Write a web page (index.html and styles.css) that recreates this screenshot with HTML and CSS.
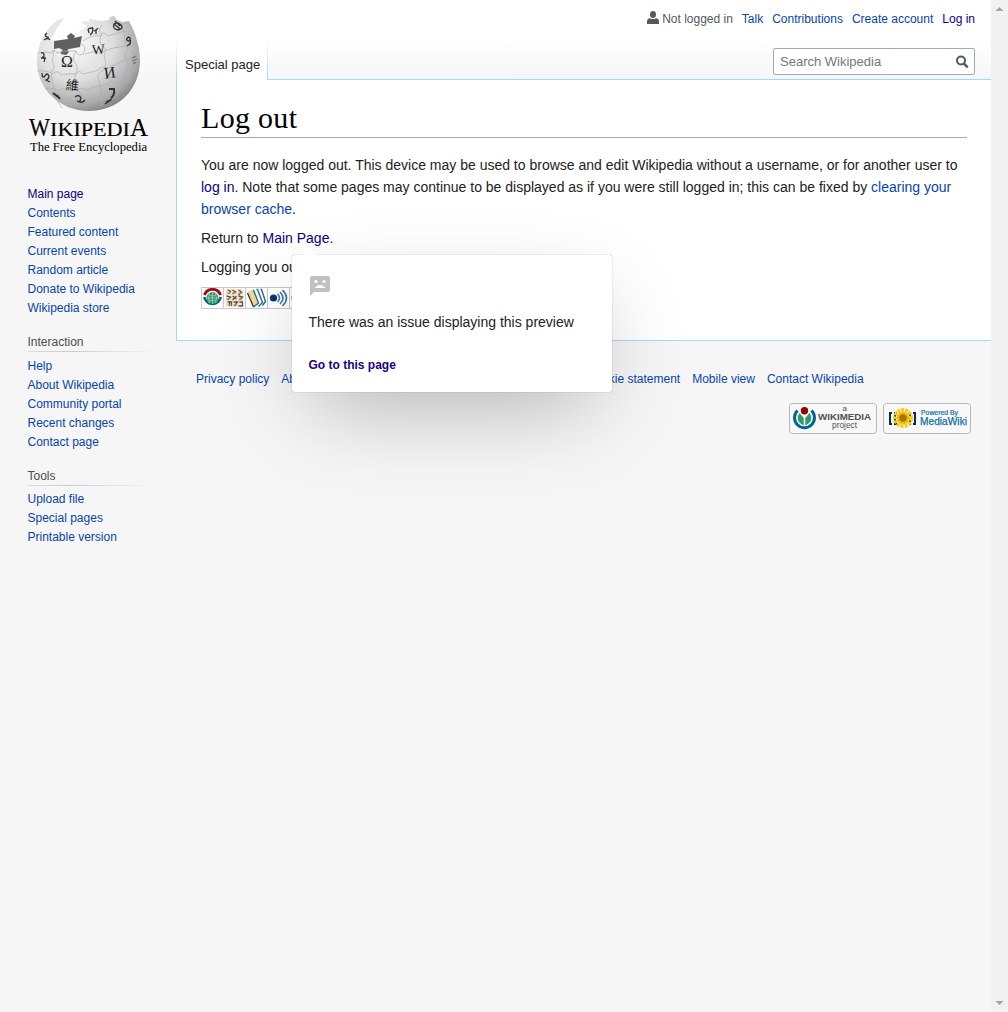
FILE: index.html
```html
<!DOCTYPE html>
<html lang="en">
<head>
<meta charset="utf-8">
<title>Log out - Wikipedia</title>
<link rel="stylesheet" href="styles.css">
</head>
<body>
<div class="page">
  <aside class="sidebar">
    <svg class="logo" width="140" height="155" viewBox="0 0 140 155">
      <defs>
        <radialGradient id="globe" cx=".36" cy=".3" r=".75"><stop offset="0" stop-color="#fafafa"/><stop offset=".5" stop-color="#dededf"/><stop offset=".85" stop-color="#aaa"/><stop offset="1" stop-color="#818181"/></radialGradient>
      </defs>
      <path d="M38 15l6-2-3 5-4 5-2 5-4 5 3 4 27-6-2-5 5-2 3-4-5-1 1-3 6 1 0-3 6 1 6 1 8-1 1-3 4-1 3 4 6 2 6-1C114 25 120 40 120 55c0 30-22 51-51 51S17 84 17 56C17 38 26 23 38 15z" fill="url(#globe)"/>
      <path d="M34 36l14-2-1-3 4-3 4 3-1 2 8-2-2 11-11 2q-3 1 0 3l-3 3-5-1q-1-2 2-4l-4-2-5 1z" fill="#606060"/>
      <g fill="none" stroke="#aeaeae" stroke-width=".7">
        <path d="M18 48q8-2 13 0 3-5 6 0 9-3 19-2 2 6 7 3 5-7-3-11"/>
        <path d="M17 66q10-1 16 3 4-5 8 1 8-2 15-1 3-5 7 0 9-2 16-4 2-5 8-2 9-3 17-8 5 1 15-6"/>
        <path d="M25 84q9-2 14 2 5-5 9 0 9-2 15-3 4 4 9-1 9-1 16-3 4-5 7 0 9-5 16-8"/>
        <path d="M33 45q1 8-1 11 4 6 0 10-2 8 3 18 0 10 7 19M56 46q-5 8 0 13 3 7-1 12-1 10 5 17 0 9 7 16M82 20q-5 6 0 9-4 6 0 12 6 3 2 9 3 8 1 14-10 5-6 12 4 10 2 25M105 17q-6 4 0 12-2 8 3 14-5 5-1 12 3 7-2 14-3 12-10 25"/>
        <path d="M63 36q10-7 17-5 3-6 8 0 9-3 18-5 4 6 8 4M65 49q5-1 11-3 4 5 8 0 10-4 22-5 3-5 8-2M36 93q15 0 25 6 10-7 30-9"/>
      </g>
      <g class="globe-letter">
        <text x="41" y="62" font-size="16">Ω</text><text x="72" y="49" font-size="14" transform="rotate(-5 78 45)">W</text><text x="84" y="73" font-size="16" transform="rotate(-8 90 68)">И</text><text class="cjk" x="46" y="85" font-size="13" transform="rotate(5 53 80)">維</text>
        <g fill="none" stroke="#333" stroke-width="1.300">
          <path d="M68 24l1 4M72 22l1 3M68 24q5-2 5 0 0 4-3 6M74 26q3-1 4-3M76 25v4"/>
          <path d="M94 19q-2 5 4 6 6-1 3-5-4-4-7-1l6 5M95 16l5 5"/>
          <path d="M108 32q-3 4 1 4 3-3-1-4M110 34q2 5-3 7"/>
          <path d="M24 35q4-3 6 0M25 30q1 3 4 2M25 30l2-2"/>
          <path d="M21 48q3-1 3 2t-2 2q4 1 2 5M21 53h5"/>
          <path d="M22 68q0 6 3 3 2-4 4 0 0 3-3 4l4 2"/>
          <path d="M112 53l4-2M112 56l5-2M113 59l3-2" opacity=".5"/>
          <path d="M89 84h5q1 6-3 9" stroke-width="2"/>
          <path d="M33 88l5 4M37 90l3 4" stroke-width="2"/>
          <path d="M55 92q4-3 6 1-1 5-4 3 5 3 8-1"/>
          <path d="M86 97l6-3M85 99l6-4"/>
        </g>
      </g>
      <g class="wordmark"><text x="9" y="131" font-size="25" textLength="21" lengthAdjust="spacingAndGlyphs">W</text><text x="30" y="131" font-size="19" textLength="80" lengthAdjust="spacingAndGlyphs">IKIPEDI</text><text x="110" y="131" font-size="25" textLength="18" lengthAdjust="spacingAndGlyphs">A</text><text x="10" y="145.500" font-size="13.500" stroke="none" textLength="117" lengthAdjust="spacingAndGlyphs">The Free Encyclopedia</text></g>
    </svg>
    <nav class="portal">
      <a class="visited">Main page</a><a>Contents</a><a>Featured content</a><a>Current events</a><a>Random article</a><a>Donate to Wikipedia</a><a>Wikipedia store</a>
    </nav>
    <nav class="portal">
      <h3>Interaction</h3>
      <a>Help</a><a>About Wikipedia</a><a>Community portal</a><a>Recent changes</a><a>Contact page</a>
    </nav>
    <nav class="portal tools">
      <h3>Tools</h3>
      <a>Upload file</a><a>Special pages</a><a>Printable version</a>
    </nav>
  </aside>

  <div class="column">
    <header class="head">
      <div class="personal">
        <span class="anon"><svg width="12" height="14" viewBox="0 0 12 14"><ellipse cx="6" cy="3.500" rx="3" ry="3.500"/><path d="M0 13v-2.500Q0 7.500 3 7.200q3 1.700 6 0 3 .3 3 3.300V13z"/></svg>Not logged in</span>
        <a>Talk</a><a>Contributions</a><a>Create account</a><a class="visited">Log in</a>
      </div>
      <div class="bar">
        <span class="tab">Special page</span>
        <div class="search"><span>Search Wikipedia</span><svg width="14" height="14" viewBox="0 0 14 14" fill="none" stroke="#54595d" stroke-width="2"><circle cx="6" cy="5.500" r="4"/><path d="M8.700 8.300l4 4" stroke-width="2.500"/></svg></div>
      </div>
    </header>
    <main class="content">
      <h1>Log out</h1>
      <p>You are now logged out. This device may be used to browse and edit Wikipedia without a username, or for another user to <a class="visited">log in</a>. Note that some pages may continue to be displayed as if you were still logged in; this can be fixed by <a>clearing your browser cache</a>.</p>
      <p>Return to <span class="preview-anchor"><a class="visited">Main Page</a><span class="popup">
          <svg class="sad" width="20" height="20" viewBox="0 0 20 20"><path d="M2 0h16q2 0 2 2v12q0 2-2 2H4l-4 4V2Q0 0 2 0z" fill="#c1c1c1"/><circle cx="6" cy="5.500" r="1.600" fill="#fff"/><circle cx="14" cy="5.500" r="1.600" fill="#fff"/><path d="M4.500 12q5.500-6 11 0z" fill="#fff"/></svg>
          <span class="issue">There was an issue displaying this preview</span>
          <b>Go to this page</b>
        </span></span>.</p>
      <p>Logging you out</p>
      <div class="projects">
        <svg viewBox="0 0 20 20"><path d="M2 7A8.500 8.500 0 0 1 18 7" fill="none" stroke="#a20a16" stroke-width="3"/><path d="M1.800 9a8.300 8.300 0 0 0 16.400 0" fill="none" stroke="#096391" stroke-width="2.600"/><circle cx="10" cy="10" r="6" fill="#379665"/><path d="M4 10h12M10 4v12M6 6q4 4 8 0M6 14q4-4 8 0M7 5q-2 5 0 10M13 5q2 5 0 10" fill="none" stroke="#a6d8b9" stroke-width=".7"/></svg>
        <svg viewBox="0 0 20 20"><path d="M1 1h18v18H1z" fill="#f1e8d8"/><path d="M3 2l3 1-2 3M8 2l3 2-3 2M14 2l3 2-3 3M2 8l4 1-3 3M8 8l4 3M12 8l-4 4M14 8l4 1-3 3M3 14h4v4M5 13v5M9 14h4l-3 4M15 14h3v4h-4" fill="none" stroke="#675040" stroke-width="1.300"/><path d="M2 5h4M8 5h4M14 5h4M2 11h4M14 11h4M3 17h4M9 17h4" stroke="#b79a75"/></svg>
        <svg viewBox="0 0 20 20"><path d="M1 4l6-3 5 14-5 4z" fill="#eed995"/><path d="M7 2l5 13-5 4M10 1.500l1 0 5 13-4 4M14 1.500h1l4 12-3 4" fill="none" stroke="#2e6ba0" stroke-width="1.400"/><path d="M1 5l6 14" stroke="#333" stroke-width="1.300"/></svg>
        <svg viewBox="0 0 20 20"><circle cx="5" cy="10" r="3.600" fill="#063774"/><g fill="none" stroke="#3c74ac" stroke-width="1.600"><path d="M9 6q4 4 0 8M11.500 4q6 6 0 12M14 2q8 8 0 16"/></g></svg>
        <svg viewBox="0 0 20 20"><circle cx="9" cy="10" r="8" fill="#345597"/></svg>
      </div>
    </main>
    <footer>
      <div class="links"><a>Privacy policy</a><a>About Wikipedia</a><a>Disclaimers</a><a>Developers</a><a>Statistics</a><a>Cookie statement</a><a>Mobile view</a><a>Contact Wikipedia</a></div>
      <div class="badges">
        <svg width="88" height="31" viewBox="0 0 88 31"><rect class="plate" x=".5" y=".5" width="87" height="30" rx="3"/><path d="M8.500 7.500a10 10 0 1 0 14 0" fill="none" stroke="#069" stroke-width="3"/><path d="M10.500 10q-5 8 4.200 12.500V15zM20.500 10q5 8-4.200 12.500V15z" fill="#396"/><circle cx="15.500" cy="7.700" r="3.700" fill="#900"/><g fill="#505050"><text x="53.500" y="7.500" font-size="8">a</text><text x="29" y="17" font-size="9" font-weight="700" textLength="53" lengthAdjust="spacingAndGlyphs">WIKIMEDIA</text><text x="43" y="25" font-size="8.500" textLength="25" lengthAdjust="spacingAndGlyphs">project</text></g></svg>
        <svg width="88" height="31" viewBox="0 0 88 31"><rect class="plate" x=".5" y=".5" width="87" height="30" rx="3"/><path d="M9 10H7v11h2M14 10h-2v11h2M30 10h2v11h-2M26 10h1v11h-1" fill="none" stroke="#002c68" stroke-width="2"/><circle cx="20" cy="15" r="7.500" fill="none" stroke="#f5cd14" stroke-width="5" stroke-dasharray="2.800 .9"/><circle cx="20" cy="15" r="6" fill="#f3ba05"/><circle cx="20" cy="15" r="3.700" fill="#aa730d"/><g fill="#1470a4"><text x="38" y="12" font-size="7" stroke="#1470a4" stroke-width=".2" textLength="37" lengthAdjust="spacingAndGlyphs">Powered By</text><text x="37" y="22" font-size="10" stroke="#1470a4" stroke-width=".25" textLength="47" lengthAdjust="spacingAndGlyphs">MediaWiki</text></g></svg>
      </div>
    </footer>
  </div>
  <div class="scrollbar"><svg width="9" height="5" viewBox="0 0 9 5"><path d="M.5 5l4-4 4 4z"/></svg><svg width="9" height="5" viewBox="0 0 9 5"><path d="M.5 0l4 4 4-4z"/></svg></div>
</div>
</body>
</html>
```
FILE: styles.css
```css
* { box-sizing: border-box; }
body { margin: 0; background: #f6f6f6; color: #222; font: 14px/22px "Liberation Sans", Arial, sans-serif; }
svg { display: block; flex: none; }
a { color: #0645ad; }
a.visited { color: #0b0080; }
.page { display: grid; grid-template-columns: 176px 815px 17px; height: 1012px; overflow: hidden; background: linear-gradient(#fff 50%, #f6f6f6) 0 0 / 100% 80px no-repeat; }
.sidebar { padding: 5px 0 0 20px; }
.logo { margin-bottom: 25px; }
.globe-letter { font-family: "Liberation Serif", serif; fill: #222; }
.globe-letter .cjk { font-family: "Noto Sans CJK TC", sans-serif; }
.wordmark { font-family: "Liberation Serif", serif; fill: #000; stroke: #000; stroke-width: .15; }
.portal { display: flex; flex-direction: column; margin: 0 20px 15px 7.500px; font-size: 12px; line-height: 19px; }
.portal h3 { margin: 0 0 5px; color: #4d4d4d; font: inherit; background: linear-gradient(to right, #ddd, #c8ccd1 33%, #c8ccd100) 0 100% / 100% 1px no-repeat; }
.portal.tools h3 { margin-bottom: 4px; }
.head { display: flex; flex-direction: column; height: 79px; }
.personal { display: flex; justify-content: flex-end; gap: 9px; height: 40px; padding: 8px 16px 0 0; font-size: 12px; }
.anon { display: flex; gap: 3px; color: #54595d; fill: #54595d; }
.anon svg { margin-top: 3px; }
.bar { display: flex; justify-content: space-between; height: 40px; flex: none; padding-right: 16px; }
.tab { position: relative; z-index: 1; height: 40px; width: 92px; padding: 14px 0 0 9px; font-size: 13px; white-space: nowrap; background: linear-gradient(#fff, #a7d7f9) 0 0 / 1px 100% no-repeat, linear-gradient(#fff, #a7d7f9) 100% 0 / 1px 100% no-repeat, #fff; }
.search { display: flex; justify-content: space-between; width: 202px; height: 27px; margin-top: 8px; padding: 2px 5px 0 6px; border: 1px solid #a2a9b1; border-radius: 2px; background: #fff; font-size: 13px; color: #72777d; }
.search svg { margin-top: 4px; }
.head { padding-top: 1px; }
.personal { height: 39px; flex: none; padding-top: 7px; }
.bar { height: 40px; }
.search { margin-top: 8px; }
.content { height: 262px; padding: 20px 24px 0; border: 1px solid #a7d7f9; border-right: 0; background: #fff; }
h1 { margin: 0 0 16px; height: 38px; border-bottom: 1px solid #a2a9b1; color: #000; font: 30px/36px "Liberation Serif", Georgia, serif; letter-spacing: .3px; }
p { margin: 0 0 7px; }
.preview-anchor { position: relative; }
.popup { position: absolute; z-index: 5; left: 30px; top: 25px; width: 320px; height: 137px; display: flex; flex-direction: column; padding: 21px 16px; border-radius: 2px; background: #fff; box-shadow: 0 30px 90px -20px rgba(0,0,0,.3), 0 0 1px rgba(0,0,0,.5); }
.popup::before { content: ""; position: absolute; left: 10px; top: -7px; border: solid transparent; border-width: 0 8px 8px; border-bottom-color: #fff; }
.sad { margin: 0 0 15px 2px; }
.issue { margin-bottom: 21px; }
.popup b { color: #1e0082; font-size: 12px; }
.projects { display: flex; margin-top: 9px; }
.projects svg { width: 23px; height: 22px; margin-right: -1px; border: 1px solid #c8c8c8; }
.links { display: flex; gap: 12px; padding: 27px 0 0 20px; font-size: 12px; white-space: nowrap; }
.badges { display: flex; justify-content: flex-end; gap: 6px; padding: 13px 20px 0 0; }
.badges text { font-family: "Liberation Sans", sans-serif; }
.plate { fill: #f8f8f8; stroke: #b9b9b9; }
.scrollbar { display: flex; flex-direction: column; justify-content: space-between; align-items: center; padding: 6px 0; background: #f1f1f1; fill: #a3a3a3; }
```
